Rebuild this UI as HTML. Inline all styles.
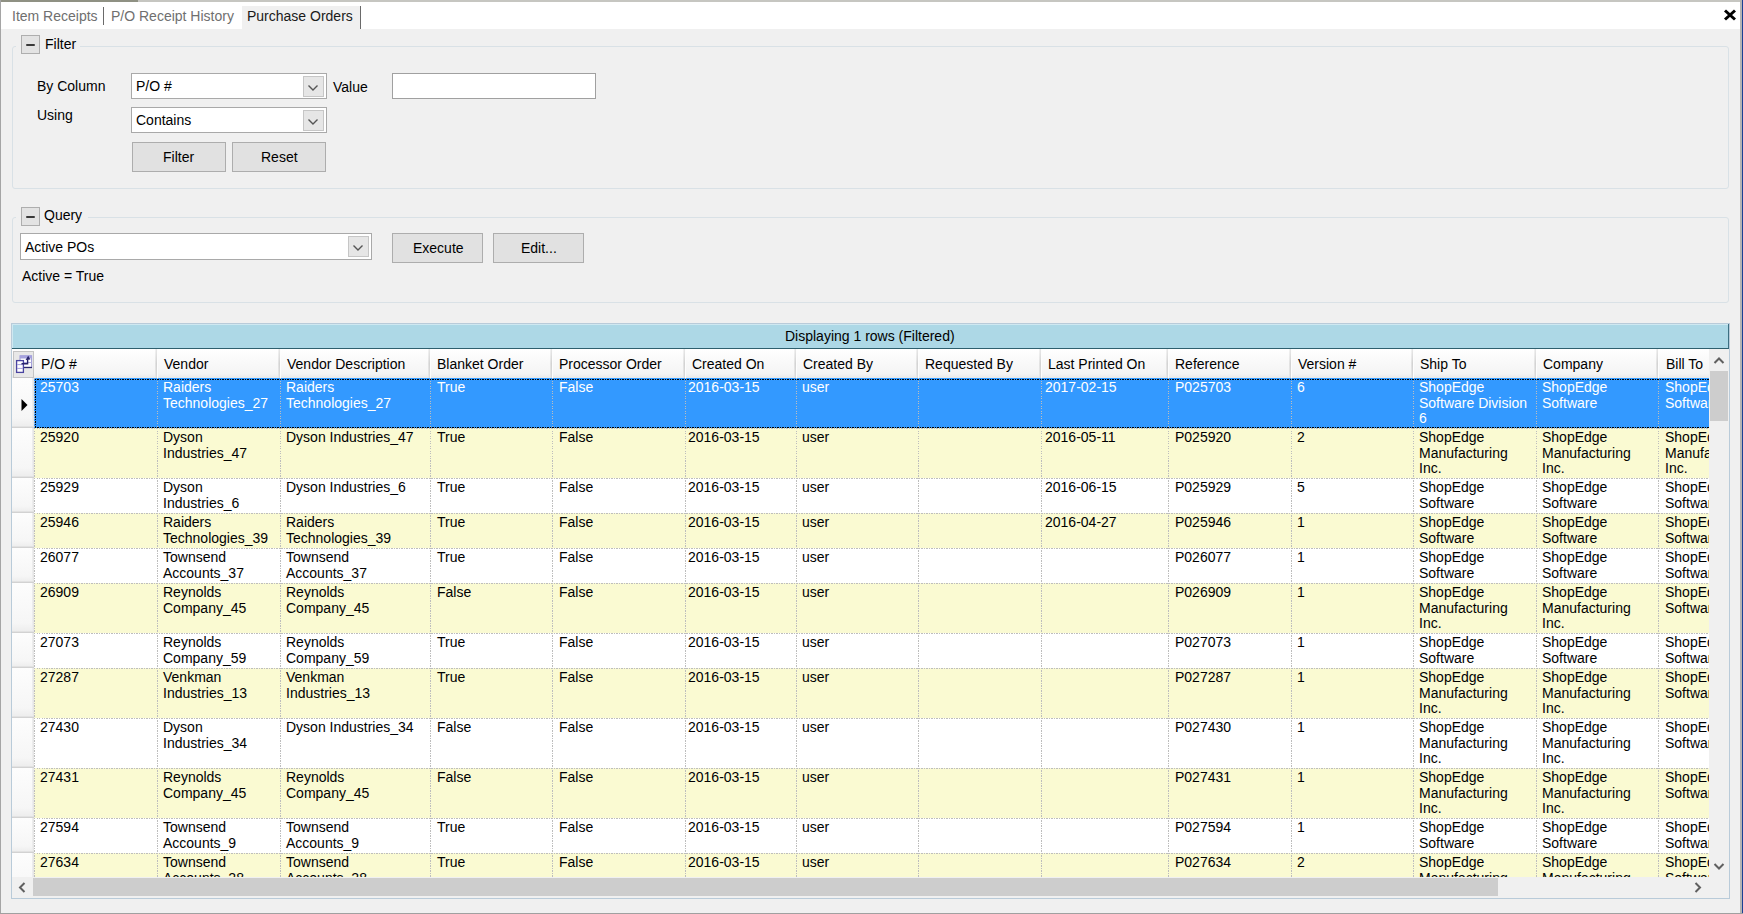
<!DOCTYPE html><html><head><meta charset="utf-8"><style>
*{margin:0;padding:0;box-sizing:border-box}
html,body{width:1743px;height:914px;overflow:hidden;background:#f0f0f0;position:relative;font-family:"Liberation Sans",sans-serif;font-size:14px;color:#000}
.t{position:absolute;white-space:nowrap;line-height:16px;font-size:14px}
.btn{position:absolute;background:#e1e1e1;border:1px solid #adadad}
.combo{position:absolute;background:#fff;border:1px solid #a9a9a9}
.dd{position:absolute;background:#e6e6e6;border:1px solid #c6c6c6}
.grp{position:absolute;border:1px solid #d9e1e6;border-radius:3px}
.col{position:absolute;width:19px;height:19px;background:#e3e3e3;border:1px solid #aeaeae}
.col::after{content:"";position:absolute;left:4px;top:7.5px;width:9px;height:2px;background:#3a3a3a;border-radius:1px}
.vl{position:absolute;width:1px;background:repeating-linear-gradient(to bottom,#bdbdbd 0 1.25px,transparent 1.25px 2.5px)}
.hl{position:absolute;height:1px;background:repeating-linear-gradient(to right,#bdbdbd 0 1.25px,transparent 1.25px 2.5px)}
.fr{position:absolute;background:repeating-linear-gradient(to right,#000 0 1.25px,transparent 1.25px 2.5px)}
.fv{position:absolute;background:repeating-linear-gradient(to bottom,#000 0 1.25px,transparent 1.25px 2.5px)}
</style></head><body>
<div style="position:absolute;left:0px;top:0px;width:1743px;height:2px;background:#c6c6c1"></div>
<div style="position:absolute;left:0px;top:0px;width:138px;height:2px;background:#8f9183"></div>
<div style="position:absolute;left:0px;top:0px;width:1px;height:914px;background:#a5a5a5"></div>
<div style="position:absolute;left:1740px;top:0px;width:2px;height:914px;background:#b4b4b4"></div>
<div style="position:absolute;left:1742px;top:0px;width:1px;height:914px;background:#1c3f94"></div>
<div style="position:absolute;left:0px;top:913px;width:1743px;height:1px;background:#a0a0a0"></div>
<div style="position:absolute;left:1px;top:2px;width:1739px;height:27px;background:#fff"></div>
<div style="position:absolute;left:242px;top:6px;width:118px;height:23px;background:#f0f0f0"></div>
<div class="t" style="left:12px;top:8px;color:#6f6f6f">Item Receipts</div>
<div style="position:absolute;left:103px;top:7px;width:1px;height:18px;background:#6a6a6a"></div>
<div class="t" style="left:111px;top:8px;color:#6f6f6f">P/O Receipt History</div>
<div class="t" style="left:247px;top:8px;color:#1a1a1a">Purchase Orders</div>
<div style="position:absolute;left:360px;top:6px;width:1px;height:23px;background:#6a6a6a"></div>
<svg style="position:absolute;left:1723px;top:9px" width="14" height="12" viewBox="0 0 14 12"><path d="M2 1.5 L12 10.5 M12 1.5 L2 10.5" stroke="#000" stroke-width="3"/></svg>
<div class="grp" style="left:12px;top:46px;width:1717px;height:143px"></div>
<div style="position:absolute;left:16px;top:40px;width:64px;height:10px;background:#f0f0f0"></div>
<div class="col" style="left:21px;top:35px"></div>
<div class="t" style="left:45px;top:36px;">Filter</div>
<div class="t" style="left:37px;top:78px;">By Column</div>
<div class="combo" style="left:131px;top:73px;width:196px;height:26px"></div>
<div class="dd" style="left:303px;top:76px;width:21px;height:21px"></div>
<div class="t" style="left:136px;top:78px;">P/O #</div>
<div class="t" style="left:333px;top:79px;">Value</div>
<div class="combo" style="left:392px;top:73px;width:204px;height:26px;border-color:#a0a0a0"></div>
<div class="t" style="left:37px;top:107px;">Using</div>
<div class="combo" style="left:131px;top:107px;width:196px;height:26px"></div>
<div class="dd" style="left:303px;top:110px;width:21px;height:21px"></div>
<div class="t" style="left:136px;top:112px;">Contains</div>
<div class="btn" style="left:132px;top:142px;width:94px;height:30px"></div>
<div class="t" style="left:163px;top:149px;">Filter</div>
<div class="btn" style="left:232px;top:142px;width:94px;height:30px"></div>
<div class="t" style="left:261px;top:149px;">Reset</div>
<svg style="position:absolute;left:307px;top:84px" width="12" height="8" viewBox="0 0 12 8"><path d="M1.5 1.5 L6 6 L10.5 1.5" fill="none" stroke="#555" stroke-width="1.4"/></svg>
<svg style="position:absolute;left:307px;top:118px" width="12" height="8" viewBox="0 0 12 8"><path d="M1.5 1.5 L6 6 L10.5 1.5" fill="none" stroke="#555" stroke-width="1.4"/></svg>
<div class="grp" style="left:12px;top:217px;width:1717px;height:86px"></div>
<div style="position:absolute;left:16px;top:210px;width:72px;height:10px;background:#f0f0f0"></div>
<div class="col" style="left:21px;top:207px"></div>
<div class="t" style="left:44px;top:207px;">Query</div>
<div class="combo" style="left:20px;top:233px;width:352px;height:27px"></div>
<div class="dd" style="left:348px;top:236px;width:21px;height:21px"></div>
<svg style="position:absolute;left:352px;top:244px" width="12" height="8" viewBox="0 0 12 8"><path d="M1.5 1.5 L6 6 L10.5 1.5" fill="none" stroke="#555" stroke-width="1.4"/></svg>
<div class="t" style="left:25px;top:239px;">Active POs</div>
<div class="btn" style="left:392px;top:233px;width:91px;height:30px"></div>
<div class="t" style="left:413px;top:240px;">Execute</div>
<div class="btn" style="left:493px;top:233px;width:91px;height:30px"></div>
<div class="t" style="left:521px;top:240px;">Edit...</div>
<div class="t" style="left:22px;top:268px;">Active = True</div>
<div style="position:absolute;left:11px;top:323px;width:1719px;height:576px;background:#fff;border:1px solid #b9cbd9"></div>
<div style="position:absolute;left:12px;top:324px;width:1717px;height:25px;background:#add8e6;border-right:1px solid #3d6f82;border-bottom:1px solid #2e5f6e;box-shadow:inset 1px 1px 0 #cfe8f1"></div>
<div class="t" style="left:785px;top:328px;">Displaying 1 rows (Filtered)</div>
<div style="position:absolute;left:12px;top:349px;width:1697px;height:29px;background:linear-gradient(#fff,#f4f4f4 85%,#e9e9e9)"></div>
<svg style="position:absolute;left:13px;top:351px" width="21" height="27" viewBox="0 0 21 27">
<rect x="0.5" y="0.5" width="20" height="26" fill="#e8e8e8" stroke="#c4c4c4" stroke-width="1"/>
<rect x="7" y="4.8" width="11.6" height="11.6" fill="#fff" stroke="#9a96d6" stroke-width="1"/>
<rect x="7" y="4.5" width="11.8" height="3" fill="#a6a2de"/>
<line x1="11" y1="11.5" x2="18.6" y2="11.5" stroke="#b0acdf" stroke-width="1"/>
<line x1="10.5" y1="16.5" x2="19" y2="16.5" stroke="#2c2870" stroke-width="1.3"/>
<rect x="3.6" y="9.6" width="6.8" height="11.8" fill="#fff" stroke="#4a44a0" stroke-width="1.3"/>
<line x1="4" y1="13.6" x2="10" y2="13.6" stroke="#a6a2de" stroke-width="1"/>
<line x1="4" y1="17.4" x2="10" y2="17.4" stroke="#a6a2de" stroke-width="1"/>
<path d="M8.5 12.7 L14.6 12.7 L14.6 8.2" fill="none" stroke="#28246a" stroke-width="1.4"/>
<path d="M12.6 9 L17.4 8.4 L15.2 4.8 Z" fill="#28246a"/>
</svg>
<div style="position:absolute;left:0;top:0;width:1709px;height:914px;overflow:hidden">
<div class="t" style="left:41px;top:356px;">P/O #</div>
<div style="position:absolute;left:155px;top:349px;width:1px;height:29px;background:linear-gradient(#f2f2f2,#e2e2e2 50%,#e6e6e6)"></div>
<div style="position:absolute;left:156px;top:349px;width:1px;height:29px;background:linear-gradient(#e8e8e8,#d3d3d3 50%,#dadada)"></div>
<div style="position:absolute;left:157px;top:349px;width:1px;height:29px;background:#fdfdfd"></div>
<div class="t" style="left:164px;top:356px;">Vendor</div>
<div style="position:absolute;left:278px;top:349px;width:1px;height:29px;background:linear-gradient(#f2f2f2,#e2e2e2 50%,#e6e6e6)"></div>
<div style="position:absolute;left:279px;top:349px;width:1px;height:29px;background:linear-gradient(#e8e8e8,#d3d3d3 50%,#dadada)"></div>
<div style="position:absolute;left:280px;top:349px;width:1px;height:29px;background:#fdfdfd"></div>
<div class="t" style="left:287px;top:356px;">Vendor Description</div>
<div style="position:absolute;left:428px;top:349px;width:1px;height:29px;background:linear-gradient(#f2f2f2,#e2e2e2 50%,#e6e6e6)"></div>
<div style="position:absolute;left:429px;top:349px;width:1px;height:29px;background:linear-gradient(#e8e8e8,#d3d3d3 50%,#dadada)"></div>
<div style="position:absolute;left:430px;top:349px;width:1px;height:29px;background:#fdfdfd"></div>
<div class="t" style="left:437px;top:356px;">Blanket Order</div>
<div style="position:absolute;left:550px;top:349px;width:1px;height:29px;background:linear-gradient(#f2f2f2,#e2e2e2 50%,#e6e6e6)"></div>
<div style="position:absolute;left:551px;top:349px;width:1px;height:29px;background:linear-gradient(#e8e8e8,#d3d3d3 50%,#dadada)"></div>
<div style="position:absolute;left:552px;top:349px;width:1px;height:29px;background:#fdfdfd"></div>
<div class="t" style="left:559px;top:356px;">Processor Order</div>
<div style="position:absolute;left:683px;top:349px;width:1px;height:29px;background:linear-gradient(#f2f2f2,#e2e2e2 50%,#e6e6e6)"></div>
<div style="position:absolute;left:684px;top:349px;width:1px;height:29px;background:linear-gradient(#e8e8e8,#d3d3d3 50%,#dadada)"></div>
<div style="position:absolute;left:685px;top:349px;width:1px;height:29px;background:#fdfdfd"></div>
<div class="t" style="left:692px;top:356px;">Created On</div>
<div style="position:absolute;left:794px;top:349px;width:1px;height:29px;background:linear-gradient(#f2f2f2,#e2e2e2 50%,#e6e6e6)"></div>
<div style="position:absolute;left:795px;top:349px;width:1px;height:29px;background:linear-gradient(#e8e8e8,#d3d3d3 50%,#dadada)"></div>
<div style="position:absolute;left:796px;top:349px;width:1px;height:29px;background:#fdfdfd"></div>
<div class="t" style="left:803px;top:356px;">Created By</div>
<div style="position:absolute;left:916px;top:349px;width:1px;height:29px;background:linear-gradient(#f2f2f2,#e2e2e2 50%,#e6e6e6)"></div>
<div style="position:absolute;left:917px;top:349px;width:1px;height:29px;background:linear-gradient(#e8e8e8,#d3d3d3 50%,#dadada)"></div>
<div style="position:absolute;left:918px;top:349px;width:1px;height:29px;background:#fdfdfd"></div>
<div class="t" style="left:925px;top:356px;">Requested By</div>
<div style="position:absolute;left:1039px;top:349px;width:1px;height:29px;background:linear-gradient(#f2f2f2,#e2e2e2 50%,#e6e6e6)"></div>
<div style="position:absolute;left:1040px;top:349px;width:1px;height:29px;background:linear-gradient(#e8e8e8,#d3d3d3 50%,#dadada)"></div>
<div style="position:absolute;left:1041px;top:349px;width:1px;height:29px;background:#fdfdfd"></div>
<div class="t" style="left:1048px;top:356px;">Last Printed On</div>
<div style="position:absolute;left:1166px;top:349px;width:1px;height:29px;background:linear-gradient(#f2f2f2,#e2e2e2 50%,#e6e6e6)"></div>
<div style="position:absolute;left:1167px;top:349px;width:1px;height:29px;background:linear-gradient(#e8e8e8,#d3d3d3 50%,#dadada)"></div>
<div style="position:absolute;left:1168px;top:349px;width:1px;height:29px;background:#fdfdfd"></div>
<div class="t" style="left:1175px;top:356px;">Reference</div>
<div style="position:absolute;left:1289px;top:349px;width:1px;height:29px;background:linear-gradient(#f2f2f2,#e2e2e2 50%,#e6e6e6)"></div>
<div style="position:absolute;left:1290px;top:349px;width:1px;height:29px;background:linear-gradient(#e8e8e8,#d3d3d3 50%,#dadada)"></div>
<div style="position:absolute;left:1291px;top:349px;width:1px;height:29px;background:#fdfdfd"></div>
<div class="t" style="left:1298px;top:356px;">Version #</div>
<div style="position:absolute;left:1411px;top:349px;width:1px;height:29px;background:linear-gradient(#f2f2f2,#e2e2e2 50%,#e6e6e6)"></div>
<div style="position:absolute;left:1412px;top:349px;width:1px;height:29px;background:linear-gradient(#e8e8e8,#d3d3d3 50%,#dadada)"></div>
<div style="position:absolute;left:1413px;top:349px;width:1px;height:29px;background:#fdfdfd"></div>
<div class="t" style="left:1420px;top:356px;">Ship To</div>
<div style="position:absolute;left:1534px;top:349px;width:1px;height:29px;background:linear-gradient(#f2f2f2,#e2e2e2 50%,#e6e6e6)"></div>
<div style="position:absolute;left:1535px;top:349px;width:1px;height:29px;background:linear-gradient(#e8e8e8,#d3d3d3 50%,#dadada)"></div>
<div style="position:absolute;left:1536px;top:349px;width:1px;height:29px;background:#fdfdfd"></div>
<div class="t" style="left:1543px;top:356px;">Company</div>
<div style="position:absolute;left:1656px;top:349px;width:1px;height:29px;background:linear-gradient(#f2f2f2,#e2e2e2 50%,#e6e6e6)"></div>
<div style="position:absolute;left:1657px;top:349px;width:1px;height:29px;background:linear-gradient(#e8e8e8,#d3d3d3 50%,#dadada)"></div>
<div style="position:absolute;left:1658px;top:349px;width:1px;height:29px;background:#fdfdfd"></div>
<div class="t" style="left:1666px;top:356px;">Bill To</div>
</div>
<div style="position:absolute;left:12px;top:378px;width:1697px;height:499px;overflow:hidden">
<div style="position:absolute;left:0px;top:0px;width:22px;height:50px;background:linear-gradient(#fdfdfd,#f6f6f6 80%,#ebebeb)"></div>
<div style="position:absolute;left:20px;top:0px;width:2px;height:50px;background:linear-gradient(to right,#f0f0f0,#e2e2e2)"></div>
<div style="position:absolute;left:0px;top:48px;width:22px;height:1px;background:#e2e2e2"></div>
<div style="position:absolute;left:0px;top:49px;width:22px;height:1px;background:#d2d2d2"></div>
<div style="position:absolute;left:22px;top:0px;width:1675px;height:50px;background:#3399ff"></div>
<div style="position:absolute;left:0px;top:50px;width:22px;height:50px;background:linear-gradient(#fdfdfd,#f6f6f6 80%,#ebebeb)"></div>
<div style="position:absolute;left:20px;top:50px;width:2px;height:50px;background:linear-gradient(to right,#f0f0f0,#e2e2e2)"></div>
<div style="position:absolute;left:0px;top:98px;width:22px;height:1px;background:#e2e2e2"></div>
<div style="position:absolute;left:0px;top:99px;width:22px;height:1px;background:#d2d2d2"></div>
<div style="position:absolute;left:22px;top:50px;width:1675px;height:50px;background:#fafad2"></div>
<div style="position:absolute;left:0px;top:100px;width:22px;height:35px;background:linear-gradient(#fdfdfd,#f6f6f6 80%,#ebebeb)"></div>
<div style="position:absolute;left:20px;top:100px;width:2px;height:35px;background:linear-gradient(to right,#f0f0f0,#e2e2e2)"></div>
<div style="position:absolute;left:0px;top:133px;width:22px;height:1px;background:#e2e2e2"></div>
<div style="position:absolute;left:0px;top:134px;width:22px;height:1px;background:#d2d2d2"></div>
<div style="position:absolute;left:22px;top:100px;width:1675px;height:35px;background:#ffffff"></div>
<div style="position:absolute;left:0px;top:135px;width:22px;height:35px;background:linear-gradient(#fdfdfd,#f6f6f6 80%,#ebebeb)"></div>
<div style="position:absolute;left:20px;top:135px;width:2px;height:35px;background:linear-gradient(to right,#f0f0f0,#e2e2e2)"></div>
<div style="position:absolute;left:0px;top:168px;width:22px;height:1px;background:#e2e2e2"></div>
<div style="position:absolute;left:0px;top:169px;width:22px;height:1px;background:#d2d2d2"></div>
<div style="position:absolute;left:22px;top:135px;width:1675px;height:35px;background:#fafad2"></div>
<div style="position:absolute;left:0px;top:170px;width:22px;height:35px;background:linear-gradient(#fdfdfd,#f6f6f6 80%,#ebebeb)"></div>
<div style="position:absolute;left:20px;top:170px;width:2px;height:35px;background:linear-gradient(to right,#f0f0f0,#e2e2e2)"></div>
<div style="position:absolute;left:0px;top:203px;width:22px;height:1px;background:#e2e2e2"></div>
<div style="position:absolute;left:0px;top:204px;width:22px;height:1px;background:#d2d2d2"></div>
<div style="position:absolute;left:22px;top:170px;width:1675px;height:35px;background:#ffffff"></div>
<div style="position:absolute;left:0px;top:205px;width:22px;height:50px;background:linear-gradient(#fdfdfd,#f6f6f6 80%,#ebebeb)"></div>
<div style="position:absolute;left:20px;top:205px;width:2px;height:50px;background:linear-gradient(to right,#f0f0f0,#e2e2e2)"></div>
<div style="position:absolute;left:0px;top:253px;width:22px;height:1px;background:#e2e2e2"></div>
<div style="position:absolute;left:0px;top:254px;width:22px;height:1px;background:#d2d2d2"></div>
<div style="position:absolute;left:22px;top:205px;width:1675px;height:50px;background:#fafad2"></div>
<div style="position:absolute;left:0px;top:255px;width:22px;height:35px;background:linear-gradient(#fdfdfd,#f6f6f6 80%,#ebebeb)"></div>
<div style="position:absolute;left:20px;top:255px;width:2px;height:35px;background:linear-gradient(to right,#f0f0f0,#e2e2e2)"></div>
<div style="position:absolute;left:0px;top:288px;width:22px;height:1px;background:#e2e2e2"></div>
<div style="position:absolute;left:0px;top:289px;width:22px;height:1px;background:#d2d2d2"></div>
<div style="position:absolute;left:22px;top:255px;width:1675px;height:35px;background:#ffffff"></div>
<div style="position:absolute;left:0px;top:290px;width:22px;height:50px;background:linear-gradient(#fdfdfd,#f6f6f6 80%,#ebebeb)"></div>
<div style="position:absolute;left:20px;top:290px;width:2px;height:50px;background:linear-gradient(to right,#f0f0f0,#e2e2e2)"></div>
<div style="position:absolute;left:0px;top:338px;width:22px;height:1px;background:#e2e2e2"></div>
<div style="position:absolute;left:0px;top:339px;width:22px;height:1px;background:#d2d2d2"></div>
<div style="position:absolute;left:22px;top:290px;width:1675px;height:50px;background:#fafad2"></div>
<div style="position:absolute;left:0px;top:340px;width:22px;height:50px;background:linear-gradient(#fdfdfd,#f6f6f6 80%,#ebebeb)"></div>
<div style="position:absolute;left:20px;top:340px;width:2px;height:50px;background:linear-gradient(to right,#f0f0f0,#e2e2e2)"></div>
<div style="position:absolute;left:0px;top:388px;width:22px;height:1px;background:#e2e2e2"></div>
<div style="position:absolute;left:0px;top:389px;width:22px;height:1px;background:#d2d2d2"></div>
<div style="position:absolute;left:22px;top:340px;width:1675px;height:50px;background:#ffffff"></div>
<div style="position:absolute;left:0px;top:390px;width:22px;height:50px;background:linear-gradient(#fdfdfd,#f6f6f6 80%,#ebebeb)"></div>
<div style="position:absolute;left:20px;top:390px;width:2px;height:50px;background:linear-gradient(to right,#f0f0f0,#e2e2e2)"></div>
<div style="position:absolute;left:0px;top:438px;width:22px;height:1px;background:#e2e2e2"></div>
<div style="position:absolute;left:0px;top:439px;width:22px;height:1px;background:#d2d2d2"></div>
<div style="position:absolute;left:22px;top:390px;width:1675px;height:50px;background:#fafad2"></div>
<div style="position:absolute;left:0px;top:440px;width:22px;height:35px;background:linear-gradient(#fdfdfd,#f6f6f6 80%,#ebebeb)"></div>
<div style="position:absolute;left:20px;top:440px;width:2px;height:35px;background:linear-gradient(to right,#f0f0f0,#e2e2e2)"></div>
<div style="position:absolute;left:0px;top:473px;width:22px;height:1px;background:#e2e2e2"></div>
<div style="position:absolute;left:0px;top:474px;width:22px;height:1px;background:#d2d2d2"></div>
<div style="position:absolute;left:22px;top:440px;width:1675px;height:35px;background:#ffffff"></div>
<div style="position:absolute;left:0px;top:475px;width:22px;height:50px;background:linear-gradient(#fdfdfd,#f6f6f6 80%,#ebebeb)"></div>
<div style="position:absolute;left:20px;top:475px;width:2px;height:50px;background:linear-gradient(to right,#f0f0f0,#e2e2e2)"></div>
<div style="position:absolute;left:0px;top:523px;width:22px;height:1px;background:#e2e2e2"></div>
<div style="position:absolute;left:0px;top:524px;width:22px;height:1px;background:#d2d2d2"></div>
<div style="position:absolute;left:22px;top:475px;width:1675px;height:50px;background:#fafad2"></div>
<div class="hl" style="left:22px;top:50px;width:1675px"></div>
<div class="hl" style="left:22px;top:100px;width:1675px"></div>
<div class="hl" style="left:22px;top:135px;width:1675px"></div>
<div class="hl" style="left:22px;top:170px;width:1675px"></div>
<div class="hl" style="left:22px;top:205px;width:1675px"></div>
<div class="hl" style="left:22px;top:255px;width:1675px"></div>
<div class="hl" style="left:22px;top:290px;width:1675px"></div>
<div class="hl" style="left:22px;top:340px;width:1675px"></div>
<div class="hl" style="left:22px;top:390px;width:1675px"></div>
<div class="hl" style="left:22px;top:440px;width:1675px"></div>
<div class="hl" style="left:22px;top:475px;width:1675px"></div>
<div class="vl" style="left:22px;top:0px;height:499px"></div>
<div class="vl" style="left:145px;top:0px;height:499px"></div>
<div class="vl" style="left:268px;top:0px;height:499px"></div>
<div class="vl" style="left:418px;top:0px;height:499px"></div>
<div class="vl" style="left:540px;top:0px;height:499px"></div>
<div class="vl" style="left:673px;top:0px;height:499px"></div>
<div class="vl" style="left:784px;top:0px;height:499px"></div>
<div class="vl" style="left:906px;top:0px;height:499px"></div>
<div class="vl" style="left:1029px;top:0px;height:499px"></div>
<div class="vl" style="left:1156px;top:0px;height:499px"></div>
<div class="vl" style="left:1279px;top:0px;height:499px"></div>
<div class="vl" style="left:1401px;top:0px;height:499px"></div>
<div class="vl" style="left:1524px;top:0px;height:499px"></div>
<div class="vl" style="left:1646px;top:0px;height:499px"></div>
<div class="t" style="left:28px;top:1px;color:#fff">25703</div>
<div class="t" style="left:151px;top:1px;color:#fff">Raiders</div>
<div class="t" style="left:151px;top:17px;color:#fff">Technologies_27</div>
<div class="t" style="left:274px;top:1px;color:#fff">Raiders</div>
<div class="t" style="left:274px;top:17px;color:#fff">Technologies_27</div>
<div class="t" style="left:425px;top:1px;color:#fff">True</div>
<div class="t" style="left:547px;top:1px;color:#fff">False</div>
<div class="t" style="left:676px;top:1px;color:#fff">2016-03-15</div>
<div class="t" style="left:790px;top:1px;color:#fff">user</div>
<div class="t" style="left:1033px;top:1px;color:#fff">2017-02-15</div>
<div class="t" style="left:1163px;top:1px;color:#fff">P025703</div>
<div class="t" style="left:1285px;top:1px;color:#fff">6</div>
<div class="t" style="left:1407px;top:1px;color:#fff">ShopEdge</div>
<div class="t" style="left:1407px;top:17px;color:#fff">Software Division</div>
<div class="t" style="left:1407px;top:32px;color:#fff">6</div>
<div class="t" style="left:1530px;top:1px;color:#fff">ShopEdge</div>
<div class="t" style="left:1530px;top:17px;color:#fff">Software</div>
<div class="t" style="left:1653px;top:1px;color:#fff">ShopEdge</div>
<div class="t" style="left:1653px;top:17px;color:#fff">Software</div>
<div class="t" style="left:28px;top:51px;color:#000">25920</div>
<div class="t" style="left:151px;top:51px;color:#000">Dyson</div>
<div class="t" style="left:151px;top:67px;color:#000">Industries_47</div>
<div class="t" style="left:274px;top:51px;color:#000">Dyson Industries_47</div>
<div class="t" style="left:425px;top:51px;color:#000">True</div>
<div class="t" style="left:547px;top:51px;color:#000">False</div>
<div class="t" style="left:676px;top:51px;color:#000">2016-03-15</div>
<div class="t" style="left:790px;top:51px;color:#000">user</div>
<div class="t" style="left:1033px;top:51px;color:#000">2016-05-11</div>
<div class="t" style="left:1163px;top:51px;color:#000">P025920</div>
<div class="t" style="left:1285px;top:51px;color:#000">2</div>
<div class="t" style="left:1407px;top:51px;color:#000">ShopEdge</div>
<div class="t" style="left:1407px;top:67px;color:#000">Manufacturing</div>
<div class="t" style="left:1407px;top:82px;color:#000">Inc.</div>
<div class="t" style="left:1530px;top:51px;color:#000">ShopEdge</div>
<div class="t" style="left:1530px;top:67px;color:#000">Manufacturing</div>
<div class="t" style="left:1530px;top:82px;color:#000">Inc.</div>
<div class="t" style="left:1653px;top:51px;color:#000">ShopEdge</div>
<div class="t" style="left:1653px;top:67px;color:#000">Manufacturing</div>
<div class="t" style="left:1653px;top:82px;color:#000">Inc.</div>
<div class="t" style="left:28px;top:101px;color:#000">25929</div>
<div class="t" style="left:151px;top:101px;color:#000">Dyson</div>
<div class="t" style="left:151px;top:117px;color:#000">Industries_6</div>
<div class="t" style="left:274px;top:101px;color:#000">Dyson Industries_6</div>
<div class="t" style="left:425px;top:101px;color:#000">True</div>
<div class="t" style="left:547px;top:101px;color:#000">False</div>
<div class="t" style="left:676px;top:101px;color:#000">2016-03-15</div>
<div class="t" style="left:790px;top:101px;color:#000">user</div>
<div class="t" style="left:1033px;top:101px;color:#000">2016-06-15</div>
<div class="t" style="left:1163px;top:101px;color:#000">P025929</div>
<div class="t" style="left:1285px;top:101px;color:#000">5</div>
<div class="t" style="left:1407px;top:101px;color:#000">ShopEdge</div>
<div class="t" style="left:1407px;top:117px;color:#000">Software</div>
<div class="t" style="left:1530px;top:101px;color:#000">ShopEdge</div>
<div class="t" style="left:1530px;top:117px;color:#000">Software</div>
<div class="t" style="left:1653px;top:101px;color:#000">ShopEdge</div>
<div class="t" style="left:1653px;top:117px;color:#000">Software</div>
<div class="t" style="left:28px;top:136px;color:#000">25946</div>
<div class="t" style="left:151px;top:136px;color:#000">Raiders</div>
<div class="t" style="left:151px;top:152px;color:#000">Technologies_39</div>
<div class="t" style="left:274px;top:136px;color:#000">Raiders</div>
<div class="t" style="left:274px;top:152px;color:#000">Technologies_39</div>
<div class="t" style="left:425px;top:136px;color:#000">True</div>
<div class="t" style="left:547px;top:136px;color:#000">False</div>
<div class="t" style="left:676px;top:136px;color:#000">2016-03-15</div>
<div class="t" style="left:790px;top:136px;color:#000">user</div>
<div class="t" style="left:1033px;top:136px;color:#000">2016-04-27</div>
<div class="t" style="left:1163px;top:136px;color:#000">P025946</div>
<div class="t" style="left:1285px;top:136px;color:#000">1</div>
<div class="t" style="left:1407px;top:136px;color:#000">ShopEdge</div>
<div class="t" style="left:1407px;top:152px;color:#000">Software</div>
<div class="t" style="left:1530px;top:136px;color:#000">ShopEdge</div>
<div class="t" style="left:1530px;top:152px;color:#000">Software</div>
<div class="t" style="left:1653px;top:136px;color:#000">ShopEdge</div>
<div class="t" style="left:1653px;top:152px;color:#000">Software</div>
<div class="t" style="left:28px;top:171px;color:#000">26077</div>
<div class="t" style="left:151px;top:171px;color:#000">Townsend</div>
<div class="t" style="left:151px;top:187px;color:#000">Accounts_37</div>
<div class="t" style="left:274px;top:171px;color:#000">Townsend</div>
<div class="t" style="left:274px;top:187px;color:#000">Accounts_37</div>
<div class="t" style="left:425px;top:171px;color:#000">True</div>
<div class="t" style="left:547px;top:171px;color:#000">False</div>
<div class="t" style="left:676px;top:171px;color:#000">2016-03-15</div>
<div class="t" style="left:790px;top:171px;color:#000">user</div>
<div class="t" style="left:1163px;top:171px;color:#000">P026077</div>
<div class="t" style="left:1285px;top:171px;color:#000">1</div>
<div class="t" style="left:1407px;top:171px;color:#000">ShopEdge</div>
<div class="t" style="left:1407px;top:187px;color:#000">Software</div>
<div class="t" style="left:1530px;top:171px;color:#000">ShopEdge</div>
<div class="t" style="left:1530px;top:187px;color:#000">Software</div>
<div class="t" style="left:1653px;top:171px;color:#000">ShopEdge</div>
<div class="t" style="left:1653px;top:187px;color:#000">Software</div>
<div class="t" style="left:28px;top:206px;color:#000">26909</div>
<div class="t" style="left:151px;top:206px;color:#000">Reynolds</div>
<div class="t" style="left:151px;top:222px;color:#000">Company_45</div>
<div class="t" style="left:274px;top:206px;color:#000">Reynolds</div>
<div class="t" style="left:274px;top:222px;color:#000">Company_45</div>
<div class="t" style="left:425px;top:206px;color:#000">False</div>
<div class="t" style="left:547px;top:206px;color:#000">False</div>
<div class="t" style="left:676px;top:206px;color:#000">2016-03-15</div>
<div class="t" style="left:790px;top:206px;color:#000">user</div>
<div class="t" style="left:1163px;top:206px;color:#000">P026909</div>
<div class="t" style="left:1285px;top:206px;color:#000">1</div>
<div class="t" style="left:1407px;top:206px;color:#000">ShopEdge</div>
<div class="t" style="left:1407px;top:222px;color:#000">Manufacturing</div>
<div class="t" style="left:1407px;top:237px;color:#000">Inc.</div>
<div class="t" style="left:1530px;top:206px;color:#000">ShopEdge</div>
<div class="t" style="left:1530px;top:222px;color:#000">Manufacturing</div>
<div class="t" style="left:1530px;top:237px;color:#000">Inc.</div>
<div class="t" style="left:1653px;top:206px;color:#000">ShopEdge</div>
<div class="t" style="left:1653px;top:222px;color:#000">Software</div>
<div class="t" style="left:28px;top:256px;color:#000">27073</div>
<div class="t" style="left:151px;top:256px;color:#000">Reynolds</div>
<div class="t" style="left:151px;top:272px;color:#000">Company_59</div>
<div class="t" style="left:274px;top:256px;color:#000">Reynolds</div>
<div class="t" style="left:274px;top:272px;color:#000">Company_59</div>
<div class="t" style="left:425px;top:256px;color:#000">True</div>
<div class="t" style="left:547px;top:256px;color:#000">False</div>
<div class="t" style="left:676px;top:256px;color:#000">2016-03-15</div>
<div class="t" style="left:790px;top:256px;color:#000">user</div>
<div class="t" style="left:1163px;top:256px;color:#000">P027073</div>
<div class="t" style="left:1285px;top:256px;color:#000">1</div>
<div class="t" style="left:1407px;top:256px;color:#000">ShopEdge</div>
<div class="t" style="left:1407px;top:272px;color:#000">Software</div>
<div class="t" style="left:1530px;top:256px;color:#000">ShopEdge</div>
<div class="t" style="left:1530px;top:272px;color:#000">Software</div>
<div class="t" style="left:1653px;top:256px;color:#000">ShopEdge</div>
<div class="t" style="left:1653px;top:272px;color:#000">Software</div>
<div class="t" style="left:28px;top:291px;color:#000">27287</div>
<div class="t" style="left:151px;top:291px;color:#000">Venkman</div>
<div class="t" style="left:151px;top:307px;color:#000">Industries_13</div>
<div class="t" style="left:274px;top:291px;color:#000">Venkman</div>
<div class="t" style="left:274px;top:307px;color:#000">Industries_13</div>
<div class="t" style="left:425px;top:291px;color:#000">True</div>
<div class="t" style="left:547px;top:291px;color:#000">False</div>
<div class="t" style="left:676px;top:291px;color:#000">2016-03-15</div>
<div class="t" style="left:790px;top:291px;color:#000">user</div>
<div class="t" style="left:1163px;top:291px;color:#000">P027287</div>
<div class="t" style="left:1285px;top:291px;color:#000">1</div>
<div class="t" style="left:1407px;top:291px;color:#000">ShopEdge</div>
<div class="t" style="left:1407px;top:307px;color:#000">Manufacturing</div>
<div class="t" style="left:1407px;top:322px;color:#000">Inc.</div>
<div class="t" style="left:1530px;top:291px;color:#000">ShopEdge</div>
<div class="t" style="left:1530px;top:307px;color:#000">Manufacturing</div>
<div class="t" style="left:1530px;top:322px;color:#000">Inc.</div>
<div class="t" style="left:1653px;top:291px;color:#000">ShopEdge</div>
<div class="t" style="left:1653px;top:307px;color:#000">Software</div>
<div class="t" style="left:28px;top:341px;color:#000">27430</div>
<div class="t" style="left:151px;top:341px;color:#000">Dyson</div>
<div class="t" style="left:151px;top:357px;color:#000">Industries_34</div>
<div class="t" style="left:274px;top:341px;color:#000">Dyson Industries_34</div>
<div class="t" style="left:425px;top:341px;color:#000">False</div>
<div class="t" style="left:547px;top:341px;color:#000">False</div>
<div class="t" style="left:676px;top:341px;color:#000">2016-03-15</div>
<div class="t" style="left:790px;top:341px;color:#000">user</div>
<div class="t" style="left:1163px;top:341px;color:#000">P027430</div>
<div class="t" style="left:1285px;top:341px;color:#000">1</div>
<div class="t" style="left:1407px;top:341px;color:#000">ShopEdge</div>
<div class="t" style="left:1407px;top:357px;color:#000">Manufacturing</div>
<div class="t" style="left:1407px;top:372px;color:#000">Inc.</div>
<div class="t" style="left:1530px;top:341px;color:#000">ShopEdge</div>
<div class="t" style="left:1530px;top:357px;color:#000">Manufacturing</div>
<div class="t" style="left:1530px;top:372px;color:#000">Inc.</div>
<div class="t" style="left:1653px;top:341px;color:#000">ShopEdge</div>
<div class="t" style="left:1653px;top:357px;color:#000">Software</div>
<div class="t" style="left:28px;top:391px;color:#000">27431</div>
<div class="t" style="left:151px;top:391px;color:#000">Reynolds</div>
<div class="t" style="left:151px;top:407px;color:#000">Company_45</div>
<div class="t" style="left:274px;top:391px;color:#000">Reynolds</div>
<div class="t" style="left:274px;top:407px;color:#000">Company_45</div>
<div class="t" style="left:425px;top:391px;color:#000">False</div>
<div class="t" style="left:547px;top:391px;color:#000">False</div>
<div class="t" style="left:676px;top:391px;color:#000">2016-03-15</div>
<div class="t" style="left:790px;top:391px;color:#000">user</div>
<div class="t" style="left:1163px;top:391px;color:#000">P027431</div>
<div class="t" style="left:1285px;top:391px;color:#000">1</div>
<div class="t" style="left:1407px;top:391px;color:#000">ShopEdge</div>
<div class="t" style="left:1407px;top:407px;color:#000">Manufacturing</div>
<div class="t" style="left:1407px;top:422px;color:#000">Inc.</div>
<div class="t" style="left:1530px;top:391px;color:#000">ShopEdge</div>
<div class="t" style="left:1530px;top:407px;color:#000">Manufacturing</div>
<div class="t" style="left:1530px;top:422px;color:#000">Inc.</div>
<div class="t" style="left:1653px;top:391px;color:#000">ShopEdge</div>
<div class="t" style="left:1653px;top:407px;color:#000">Software</div>
<div class="t" style="left:28px;top:441px;color:#000">27594</div>
<div class="t" style="left:151px;top:441px;color:#000">Townsend</div>
<div class="t" style="left:151px;top:457px;color:#000">Accounts_9</div>
<div class="t" style="left:274px;top:441px;color:#000">Townsend</div>
<div class="t" style="left:274px;top:457px;color:#000">Accounts_9</div>
<div class="t" style="left:425px;top:441px;color:#000">True</div>
<div class="t" style="left:547px;top:441px;color:#000">False</div>
<div class="t" style="left:676px;top:441px;color:#000">2016-03-15</div>
<div class="t" style="left:790px;top:441px;color:#000">user</div>
<div class="t" style="left:1163px;top:441px;color:#000">P027594</div>
<div class="t" style="left:1285px;top:441px;color:#000">1</div>
<div class="t" style="left:1407px;top:441px;color:#000">ShopEdge</div>
<div class="t" style="left:1407px;top:457px;color:#000">Software</div>
<div class="t" style="left:1530px;top:441px;color:#000">ShopEdge</div>
<div class="t" style="left:1530px;top:457px;color:#000">Software</div>
<div class="t" style="left:1653px;top:441px;color:#000">ShopEdge</div>
<div class="t" style="left:1653px;top:457px;color:#000">Software</div>
<div class="t" style="left:28px;top:476px;color:#000">27634</div>
<div class="t" style="left:151px;top:476px;color:#000">Townsend</div>
<div class="t" style="left:151px;top:492px;color:#000">Accounts_28</div>
<div class="t" style="left:274px;top:476px;color:#000">Townsend</div>
<div class="t" style="left:274px;top:492px;color:#000">Accounts_28</div>
<div class="t" style="left:425px;top:476px;color:#000">True</div>
<div class="t" style="left:547px;top:476px;color:#000">False</div>
<div class="t" style="left:676px;top:476px;color:#000">2016-03-15</div>
<div class="t" style="left:790px;top:476px;color:#000">user</div>
<div class="t" style="left:1163px;top:476px;color:#000">P027634</div>
<div class="t" style="left:1285px;top:476px;color:#000">2</div>
<div class="t" style="left:1407px;top:476px;color:#000">ShopEdge</div>
<div class="t" style="left:1407px;top:492px;color:#000">Manufacturing</div>
<div class="t" style="left:1407px;top:507px;color:#000">Inc.</div>
<div class="t" style="left:1530px;top:476px;color:#000">ShopEdge</div>
<div class="t" style="left:1530px;top:492px;color:#000">Manufacturing</div>
<div class="t" style="left:1530px;top:507px;color:#000">Inc.</div>
<div class="t" style="left:1653px;top:476px;color:#000">ShopEdge</div>
<div class="t" style="left:1653px;top:492px;color:#000">Software</div>
<div class="fr" style="left:23px;top:1px;width:1680px;height:1px"></div>
<div class="fr" style="left:23px;top:49px;width:1680px;height:1px"></div>
<div class="fv" style="left:23px;top:1px;width:1px;height:48px"></div>
<svg style="position:absolute;left:8.7px;top:21px" width="8" height="13" viewBox="0 0 8 13"><path d="M0.5 0 L6.5 6 L0.5 12 Z" fill="#000"/></svg>
</div>
<div style="position:absolute;left:1709px;top:349px;width:20px;height:528px;background:#f0f0f0"></div>
<div style="position:absolute;left:1710px;top:371px;width:18px;height:50px;background:#cdcdcd"></div>
<svg style="position:absolute;left:1713px;top:356px" width="12" height="9" viewBox="0 0 12 9"><path d="M1.5 7 L6 2.5 L10.5 7" fill="none" stroke="#606060" stroke-width="2"/></svg>
<svg style="position:absolute;left:1713px;top:862px" width="12" height="9" viewBox="0 0 12 9"><path d="M1.5 2 L6 6.5 L10.5 2" fill="none" stroke="#606060" stroke-width="2"/></svg>
<div style="position:absolute;left:12px;top:877px;width:1717px;height:21px;background:#f0f0f0"></div>
<div style="position:absolute;left:33px;top:878px;width:1465px;height:18px;background:#cdcdcd"></div>
<svg style="position:absolute;left:17px;top:882px" width="10" height="11" viewBox="0 0 10 11"><path d="M7.5 1 L3 5.5 L7.5 10" fill="none" stroke="#606060" stroke-width="2"/></svg>
<svg style="position:absolute;left:1693px;top:882px" width="10" height="11" viewBox="0 0 10 11"><path d="M2.5 1 L7 5.5 L2.5 10" fill="none" stroke="#606060" stroke-width="2"/></svg>
</body></html>
